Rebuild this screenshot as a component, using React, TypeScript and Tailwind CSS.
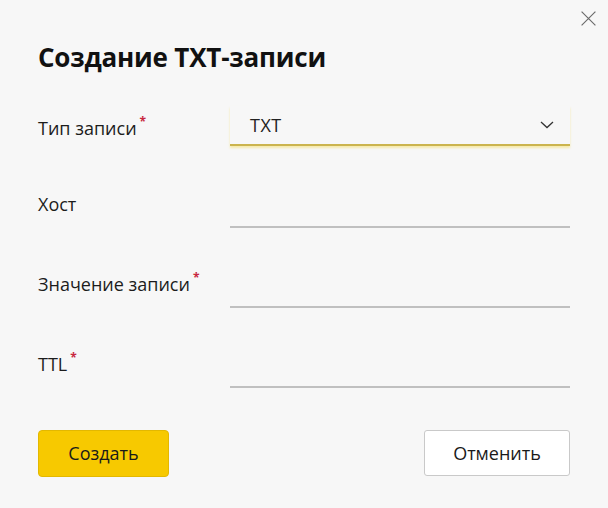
import React from 'react';

const font = { fontFamily: '"Open Sans", "Noto Sans", Arial, sans-serif' };

const Required = () => (
  <span className="ml-[3px] inline-block align-top text-[12px] leading-[12px] font-bold text-[#c8283f]">*</span>
);

type RowProps = {
  label: string;
  required?: boolean;
  children: React.ReactNode;
  height: string;
};

const Row: React.FC<RowProps> = ({ label, required, children, height }) => (
  <div className={`flex items-end ${height}`}>
    <div className="mb-[12px] w-[192px] text-[18px] leading-[24px] text-[#1c1c1c]">
      {label}
      {required && <Required />}
    </div>
    <div className="w-[340px]">{children}</div>
  </div>
);

const TextLine = () => (
  <div className="h-[38px] border-b-2 border-[#c0c0c0]" />
);

export default function App() {
  return (
    <div className="relative h-[508px] w-[608px] overflow-hidden bg-[#f7f7f7]" style={font}>
      <button className="absolute right-[11px] top-[10px] p-0 text-[#6b6b6b]" aria-label="Закрыть">
        <svg width="17" height="17" viewBox="0 0 16 16" fill="none" stroke="currentColor" strokeWidth="1.1">
          <path d="M1.5 1.5 L14.5 14.5 M14.5 1.5 L1.5 14.5" />
        </svg>
      </button>

      <div className="pl-[38px] pt-[40px]">
        <h1 className="text-[26px] font-bold leading-[34px] tracking-[-0.2px] text-[#111]">Создание TXT-записи</h1>

        <div className="-mt-[8px]">
          <div className="flex h-[80px] items-end">
            <div className="mb-[6px] w-[192px] text-[18px] leading-[24px] text-[#1c1c1c]">
              Тип записи
              <Required />
            </div>
            <div className="flex h-[40px] w-[340px] items-center justify-between border-b-2 border-[#cbb44e] pl-[20px] pr-[16px] shadow-[0_2px_2px_rgba(245,225,120,0.6)]">
              <span className="text-[18px] tracking-[0.5px] text-[#222]">TXT</span>
              <svg width="14" height="8" viewBox="0 0 14 8" fill="none" stroke="#333" strokeWidth="1.3">
                <path d="M1 1 L7 6.5 L13 1" />
              </svg>
            </div>
          </div>

          <Row label="Хост" height="h-[82px]">
            <TextLine />
          </Row>
          <Row label="Значение записи" required height="h-[80px]">
            <TextLine />
          </Row>
          <Row label="TTL" required height="h-[80px]">
            <TextLine />
          </Row>
        </div>

        <div className="mt-[42px] flex w-[532px] justify-between">
          <button className="h-[47px] w-[131px] rounded-[4px] border border-[#e3b800] bg-[#f7c900] text-[18px] text-[#1a1a1a]">
            Создать
          </button>
          <button className="h-[46px] w-[146px] rounded-[3px] border border-[#c9c9c9] bg-white text-[18px] text-[#1a1a1a]">
            Отменить
          </button>
        </div>
      </div>
    </div>
  );
}
